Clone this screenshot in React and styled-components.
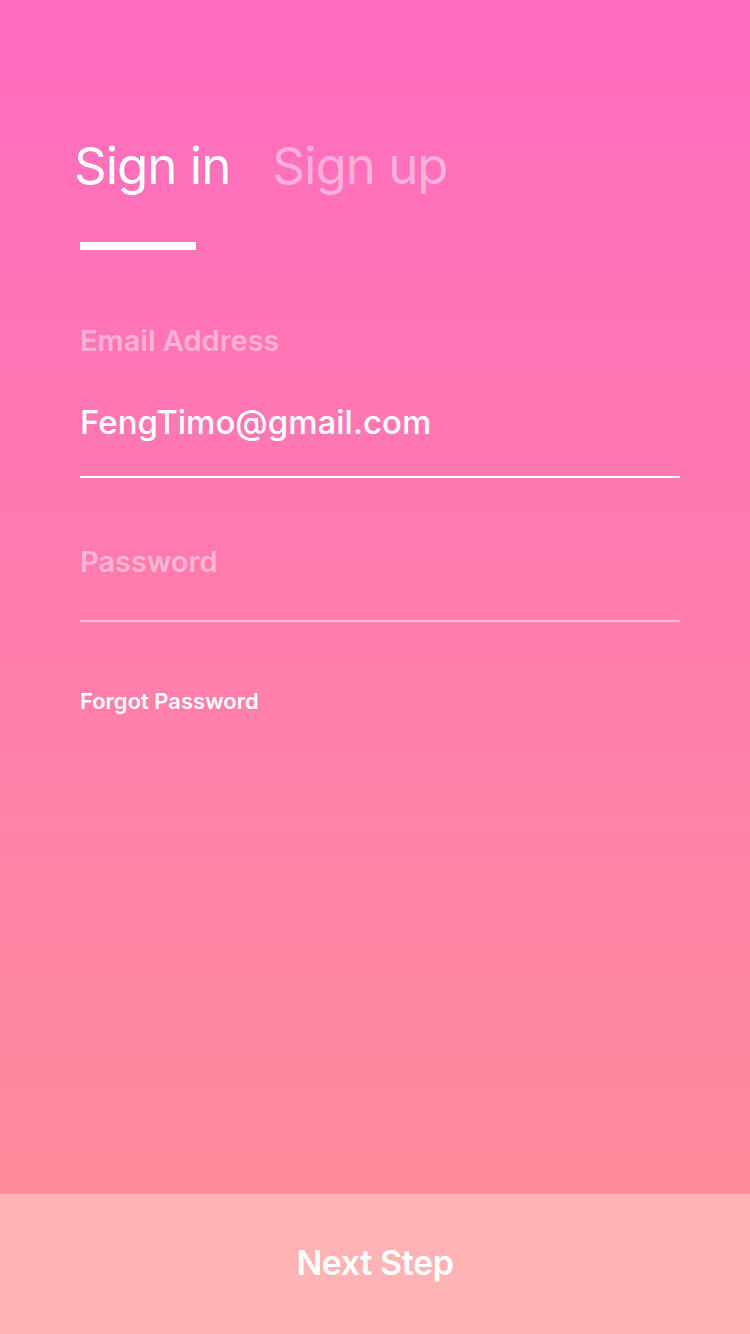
import React from "react";
import styled, { createGlobalStyle } from "styled-components";

const Global = createGlobalStyle`
  html, body { margin: 0; padding: 0; }
  body { font-family: Inter, "Noto Sans", sans-serif; -webkit-font-smoothing: antialiased; }
  * { box-sizing: border-box; }
`;

const Screen = styled.div`
  width: 750px;
  height: 1334px;
  display: flex;
  flex-direction: column;
  background: linear-gradient(180deg, #ff6cc0 0%, #ff8f97 100%);
  color: #fff;
`;

const Content = styled.div`
  flex: 1;
  padding: 130px 70px 0 80px;
  display: flex;
  flex-direction: column;
`;

const Tabs = styled.div`
  display: flex;
  gap: 42px;
  margin-left: -6px;
`;

const Tab = styled.div`
  font-size: 51px;
  font-weight: 400;
  letter-spacing: -1px;
  line-height: 72px;
  color: ${(p) => (p.$active ? "#fff" : "rgba(255,255,255,0.45)")};
`;

const Indicator = styled.div`
  width: 116px;
  height: 8px;
  background: #fff;
  margin-top: 40px;
`;

const Field = styled.div`
  display: flex;
  flex-direction: column;
  border-bottom: 2px solid ${(p) => (p.$filled ? "#fff" : "rgba(255,255,255,0.5)")};
  margin-top: ${(p) => p.$top}px;
`;

const Label = styled.div`
  font-size: 29px;
  font-weight: 600;
  line-height: 34px;
  color: rgba(255,255,255,0.45);
`;

const Value = styled.div`
  font-size: 33px;
  font-weight: 500;
  letter-spacing: 0;
  line-height: 40px;
  margin-top: 44px;
  margin-bottom: 34px;
  min-height: 40px;
`;

const Empty = styled.div`
  height: 41px;
`;

const Forgot = styled.div`
  font-size: 22px;
  font-weight: 600;
  margin-top: 65px;
  line-height: 28px;
`;

const NextButton = styled.div`
  height: 140px;
  background: #ffb3b5;
  display: flex;
  align-items: center;
  justify-content: center;
  font-size: 34px;
  font-weight: 600;
  letter-spacing: -0.4px;
  padding-bottom: 4px;
`;

export default function App() {
  return (
    <>
      <Global />
      <Screen>
        <Content>
          <Tabs>
            <Tab $active>Sign in</Tab>
            <Tab>Sign up</Tab>
          </Tabs>
          <Indicator />
          <Field $filled $top={74}>
            <Label>Email Address</Label>
            <Value>FengTimo@gmail.com</Value>
          </Field>
          <Field $top={67}>
            <Label>Password</Label>
            <Empty />
          </Field>
          <Forgot>Forgot Password</Forgot>
        </Content>
        <NextButton>Next Step</NextButton>
      </Screen>
    </>
  );
}
